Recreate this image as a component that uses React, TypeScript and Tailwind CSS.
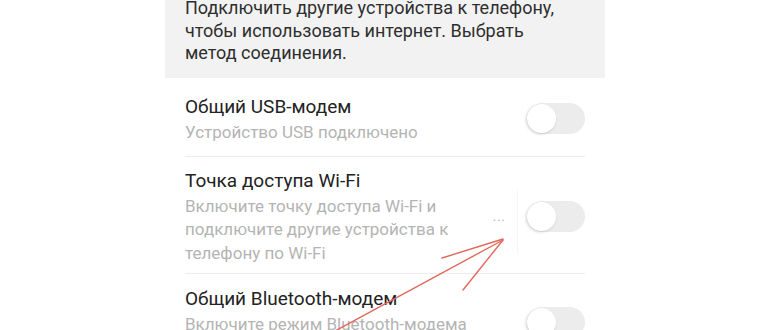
import React from "react";

function Toggle() {
  return (
    <div className="relative w-[58px] h-[31px] rounded-full bg-[#ececec] shrink-0">
      <div className="absolute left-0 top-[1px] w-[29px] h-[29px] rounded-full bg-white shadow-[-1px_1px_3px_rgba(0,0,0,0.18)]" />
    </div>
  );
}

export default function App() {
  const font = { fontFamily: "Roboto, 'Noto Sans', sans-serif" };
  return (
    <div className="relative w-[770px] h-[330px] overflow-hidden bg-white" style={font}>
      <div className="ml-[165px] w-[440px] flex flex-col">
        <div className="bg-[#f2f2f2] px-5 pb-[13px]">
          <p className="mt-[-3px] text-[18px] leading-[22.5px] text-[#2e2e2e]">
            Подключить другие устройства к телефону,
            <br />
            чтобы использовать интернет. Выбрать
            <br />
            метод соединения.
          </p>
        </div>
        <div className="px-5 flex flex-col">
          <div className="flex items-center pt-[16px] pb-[12px] border-b border-[#ececec]">
            <div className="flex-1">
              <div className="text-[19px] leading-[25px] text-[#222]">Общий USB-модем</div>
              <div className="mt-[2px] text-[17px] leading-[23px] text-[#b4b4b4]">Устройство USB подключено</div>
            </div>
            <Toggle />
          </div>
          <div className="flex items-center pt-[11px] pb-[8px] border-b border-[#ececec]">
            <div className="flex-1">
              <div className="text-[19px] leading-[25px] text-[#222]">Точка доступа Wi-Fi</div>
              <div className="mt-[2px] text-[17px] leading-[23.5px] text-[#b4b4b4]">
                Включите точку доступа Wi-Fi и
                <br />
                подключите другие устройства к
                <br />
                телефону по Wi-Fi
              </div>
            </div>
            <div className="flex items-center">
              <div className="pr-[11px] text-[13px] text-[#b0b0b0] tracking-[1px]">...</div>
              <div className="w-px h-[64px] mt-[12px] bg-[#f6f6f6] mr-[9px]" />
            </div>
            <Toggle />
          </div>
          <div className="flex items-center pt-[12px] pb-[12px]">
            <div className="flex-1">
              <div className="text-[19px] leading-[25px] text-[#222]">Общий Bluetooth-модем</div>
              <div className="mt-[2px] text-[17px] leading-[23px] text-[#b4b4b4]">
                Включите режим Bluetooth-модема
                <br />и подключите другие устройства
              </div>
            </div>
            <Toggle />
          </div>
        </div>
      </div>
      <svg className="absolute left-0 top-0 pointer-events-none" width="770" height="330" viewBox="0 0 770 330">
        <g stroke="#e2685a" strokeWidth="1.4" fill="none" strokeLinecap="round">
          <path d="M335 331 L503 240" />
          <path d="M503 239 L442 258" />
          <path d="M503 240 L463 290" />
        </g>
      </svg>
    </div>
  );
}
